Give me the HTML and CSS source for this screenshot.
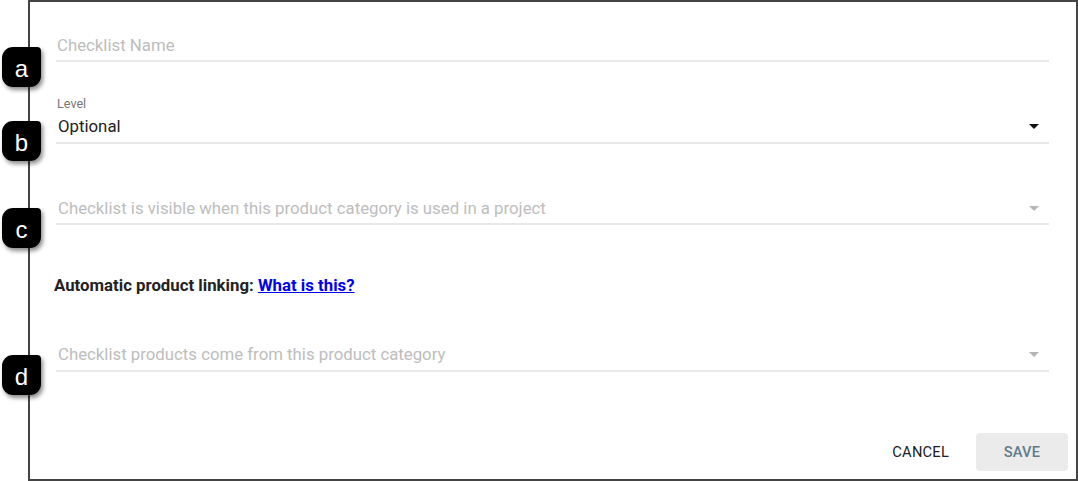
FILE: index.html
```html
<!DOCTYPE html>
<html>
<head>
<meta charset="utf-8">
<link rel="stylesheet" href="styles.css">
</head>
<body>
<div class="page">
  <div class="dialog">
    <div class="form">
      <div class="field field-name">
        <span class="placeholder">Checklist Name</span>
      </div>
      <div class="select-group">
        <div class="label">Level</div>
        <div class="field field-level">
          <span class="value">Optional</span>
          <svg class="arrow" viewBox="0 0 24 24" width="24" height="24"><path d="M7 10l5 5 5-5z" fill="#111"/></svg>
        </div>
      </div>
      <div class="field field-visible">
        <span class="placeholder">Checklist is visible when this product category is used in a project</span>
        <svg class="arrow" viewBox="0 0 24 24" width="24" height="24"><path d="M7 10l5 5 5-5z" fill="#b5b5b5"/></svg>
      </div>
      <div class="linking">Automatic product linking: <a href="#">What is this?</a></div>
      <div class="field field-products">
        <span class="placeholder">Checklist products come from this product category</span>
        <svg class="arrow" viewBox="0 0 24 24" width="24" height="24"><path d="M7 10l5 5 5-5z" fill="#b5b5b5"/></svg>
      </div>
    </div>
    <div class="actions">
      <button class="btn btn-cancel">CANCEL</button>
      <button class="btn btn-save">SAVE</button>
    </div>
  </div>
  <div class="badge badge-a">a</div>
  <div class="badge badge-b">b</div>
  <div class="badge badge-c">c</div>
  <div class="badge badge-d">d</div>
</div>
</body>
</html>
```
FILE: styles.css
```css
html, body {
  margin: 0;
  padding: 0;
  background: #fff;
}
body {
  font-family: Roboto, "Liberation Sans", sans-serif;
  width: 1078px;
  height: 481px;
  overflow: hidden;
}
.page {
  position: relative;
  width: 1078px;
  height: 481px;
}
.dialog {
  margin-left: 28px;
  width: 1050px;
  height: 481px;
  box-sizing: border-box;
  border: 2px solid #444;
  display: flex;
  flex-direction: column;
}
.form {
  padding: 0 27px 0 26px;
  display: flex;
  flex-direction: column;
}
.field {
  display: flex;
  align-items: center;
  height: 20px;
  line-height: 20px;
  font-size: 16.8px;
  border-bottom: 2px solid #e8e8e8;
}
.placeholder {
  color: #bdbdbd;
  flex: 1;
  padding-left: 1px;
}
.value {
  color: #212121;
  flex: 1;
  padding-left: 2px;
}
.arrow {
  margin-right: 3px;
  flex: none;
}
.field-name {
  margin-top: 33px;
  padding-bottom: 5px;
}
.select-group {
  margin-top: 34px;
}
.label {
  font-size: 12.6px;
  line-height: 15px;
  color: #757575;
  padding-left: 1px;
}
.field-level {
  margin-top: 5px;
  padding-bottom: 6px;
}
.field-visible {
  margin-top: 54px;
  padding-bottom: 5px;
}
.field-visible .placeholder,
.field-products .placeholder {
  padding-left: 2px;
}
.linking {
  margin-top: 50px;
  margin-left: -2px;
  font-size: 16.8px;
  line-height: 20px;
  font-weight: 700;
  color: #222;
}
.linking a {
  color: #0000ee;
  text-decoration: underline;
}
.field-products {
  margin-top: 49px;
  padding-bottom: 6px;
}
.actions {
  margin-top: 61px;
  padding-right: 8px;
  display: flex;
  justify-content: flex-end;
  gap: 11px;
}
.btn {
  font-family: Roboto, "Liberation Sans", sans-serif;
  font-weight: 500;
  font-size: 14.7px;
  letter-spacing: 0.2px;
  height: 38px;
  border: none;
  border-radius: 4px;
  background: transparent;
  padding: 0 16px;
}
.btn-cancel {
  color: #212121;
  font-weight: 400;
}
.btn-save {
  width: 92px;
  background: #ebebeb;
  color: #5d7b8c;
}
.badge {
  position: absolute;
  left: 2px;
  width: 39px;
  height: 40px;
  background: #000;
  color: #fff;
  border-radius: 11px 4px 11px 11px;
  box-shadow: 2px 3px 4px rgba(0, 0, 0, 0.45);
  display: flex;
  align-items: center;
  justify-content: center;
  font-family: "Liberation Sans", Arial, sans-serif;
  font-size: 24px;
  line-height: 1;
  padding-top: 3px;
  box-sizing: border-box;
}
.badge-a { top: 47px; }
.badge-b { top: 121px; }
.badge-c { top: 208px; }
.badge-d { top: 355px; }
```
